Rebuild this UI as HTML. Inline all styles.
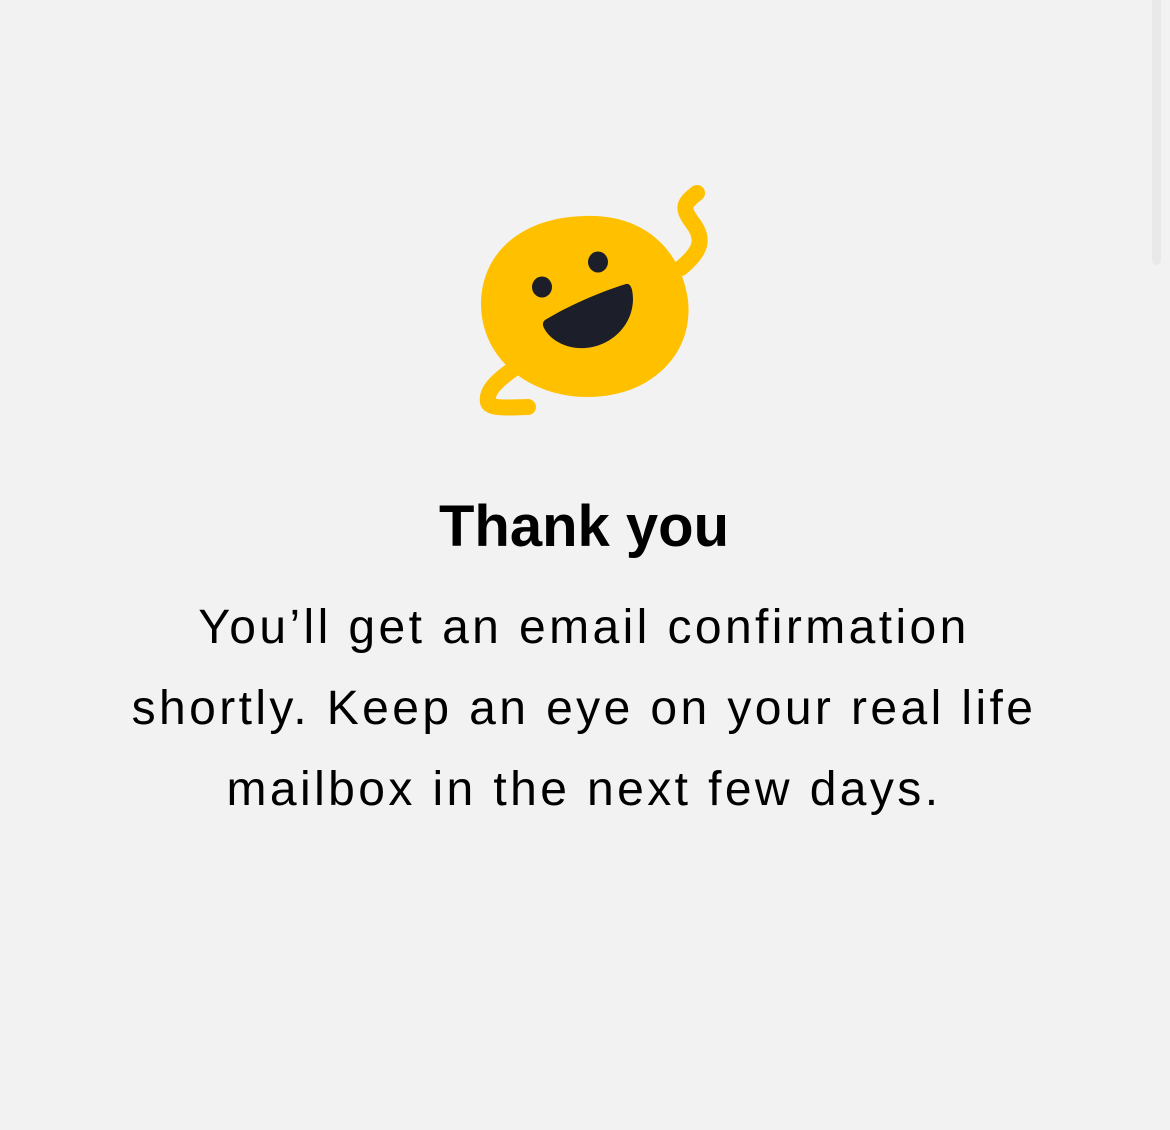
<!DOCTYPE html>
<html><head><meta charset="utf-8"><style>
html,body{margin:0;padding:0;background:#f2f2f2;width:1170px;height:1130px;overflow:hidden;position:relative}
.sb{position:absolute;left:1152px;top:0;width:9px;height:265px;background:#e9e9e9;border-radius:0 0 5px 5px}
h1{position:absolute;left:0;width:1168px;top:492px;margin:0;text-align:center;font:bold 58px/70px "Liberation Sans",sans-serif;color:#000}
p{position:absolute;left:0;width:1168px;top:587px;margin:0;text-align:center;font:48px/81px "Liberation Sans",sans-serif;letter-spacing:3.4px;color:#000}
</style></head><body>
<div class="sb"></div>
<svg style="position:absolute;left:0;top:0" width="1170" height="450">
<path d="M681 268 C700 252 706 240 692 222 C680 206 686 202 697 193" fill="none" stroke="#ffc000" stroke-width="16" stroke-linecap="round"/>
<path d="M512 370 C495 382 486 392 488 402 C490 410 515 407 528 407" fill="none" stroke="#ffc000" stroke-width="16" stroke-linecap="round"/>
<path d="M585 216 C640 214 680 245 688 300 C694 355 650 398 585 397 C530 396 482 360 481 305 C481 250 525 217 585 216 Z" fill="#ffc000"/>
<ellipse cx="542" cy="287" rx="10" ry="10.5" fill="#1c1f2a"/>
<ellipse cx="598" cy="262" rx="10" ry="10.5" fill="#1c1f2a"/>
<path d="M545 320 C570 305 600 292 626 284 C631 283 633 290 633 300 C632 330 605 350 578 348 C562 347 549 338 544 328 C542 324 543 322 545 320 Z" fill="#1c1f2a"/>
</svg>
<h1>Thank you</h1>
<p>You’ll get an email confirmation<br>shortly. Keep an eye on your real life<br>mailbox in the next few days.</p>
</body></html>
